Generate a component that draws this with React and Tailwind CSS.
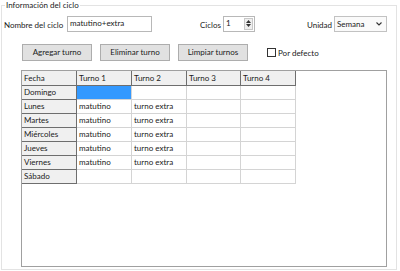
const dias = [
  ['Domingo', '', ''],
  ['Lunes', 'matutino', 'turno extra'],
  ['Martes', 'matutino', 'turno extra'],
  ['Miércoles', 'matutino', 'turno extra'],
  ['Jueves', 'matutino', 'turno extra'],
  ['Viernes', 'matutino', 'turno extra'],
  ['Sábado', '', ''],
]

function Boton({ children }) {
  return (
    <button
      type="button"
      className="h-[17px] w-[70px] border border-[#adadad] bg-[#e1e1e1] text-center leading-[15px]"
    >
      {children}
    </button>
  )
}

export default function App() {
  return (
    <div className="h-[271px] w-[400px] overflow-hidden whitespace-nowrap bg-white font-['Lato',sans-serif] text-[8px] text-[#1a1a1a]">
      <fieldset className="ml-[1px] h-[270px] w-[396px] border border-[#e3e3e3] px-0">
        <legend className="ml-[3px] px-[1px] leading-[11px]">Información del ciclo</legend>

        <div className="mt-[4px] flex h-[17px] items-center pl-[2px]">
          <span className="mt-[3px] w-[63px] shrink-0">Nombre del ciclo</span>
          <div className="h-[16px] w-[85px] shrink-0 border border-[#b8b8b8] pl-[2px] leading-[12px]">matutino+extra</div>
          <span className="ml-[auto] mt-[3px]">Ciclos</span>
          <div className="ml-[2px] flex h-[16px] w-[32px] shrink-0 border border-[#b8b8b8]">
            <span className="flex-1 pl-[2px] leading-[12px]">1</span>
            <div className="my-[1px] mr-[1px] flex w-[9px] flex-col items-center justify-center border border-[#c8c8c8] bg-[#efefef]">
              <svg width="5" height="3" viewBox="0 0 5 3"><path d="M0 3L2.5 0L5 3Z" fill="#333" /></svg>
              <div className="h-[1px]" />
              <svg width="5" height="3" viewBox="0 0 5 3"><path d="M0 0L2.5 3L5 0Z" fill="#333" /></svg>
            </div>
          </div>
          <span className="ml-[52px] mt-[3px]">Unidad</span>
          <div className="ml-[2px] mr-[9px] flex h-[16px] w-[53px] shrink-0 items-center border border-[#c2c2c2] bg-[#fafafa] pl-[2px]">
            <span className="flex-1 leading-[12px]">Semana</span>
            <svg className="mr-[4px]" width="6" height="4" viewBox="0 0 6 4">
              <path d="M0.5 0.5L3 3L5.5 0.5" fill="none" stroke="#333" strokeWidth="1.1" />
            </svg>
          </div>
        </div>

        <div className="mt-[12px] flex h-[17px] items-center gap-[8px] pl-[20px]">
          <Boton>Agregar turno</Boton>
          <Boton>Eliminar turno</Boton>
          <Boton>Limpiar turnos</Boton>
          <div className="ml-[11px] flex items-center gap-[2px]">
            <div className="h-[9px] w-[9px] border border-[#333] bg-white" />
            <span>Por defecto</span>
          </div>
        </div>

        <div className="ml-[19px] mt-[9px] h-[197px] w-[366px] border border-[#a0a0a0]">
          <div className="grid w-[274px] grid-cols-[55px_55px_55px_54px_55px]">
            {['Fecha', 'Turno 1', 'Turno 2', 'Turno 3', 'Turno 4'].map((h) => (
              <div
                key={h}
                className="h-[15px] border-b border-r border-[#6e6e6e] bg-[#f0f0f0] pl-[2px] leading-[14px]"
              >
                {h}
              </div>
            ))}
            {dias.map(([d, t1, t2], i) => (
              <div key={d} className="contents">
                <div className="h-[14px] border-b border-r border-[#6e6e6e] bg-[#f0f0f0] pl-[2px] leading-[13px]">
                  {d}
                </div>
                <div
                  className={
                    i === 0
                      ? 'h-[14px] border-b border-r border-[#d4d4d4] bg-[#3399ff] pl-[2px] leading-[13px]'
                      : 'h-[14px] border-b border-r border-[#d4d4d4] pl-[2px] leading-[13px]'
                  }
                >
                  {t1}
                </div>
                <div className="h-[14px] border-b border-r border-[#d4d4d4] pl-[2px] leading-[13px]">{t2}</div>
                <div className="h-[14px] border-b border-r border-[#d4d4d4]" />
                <div className="h-[14px] border-b border-r border-[#d4d4d4]" />
              </div>
            ))}
          </div>
        </div>
      </fieldset>
    </div>
  )
}
